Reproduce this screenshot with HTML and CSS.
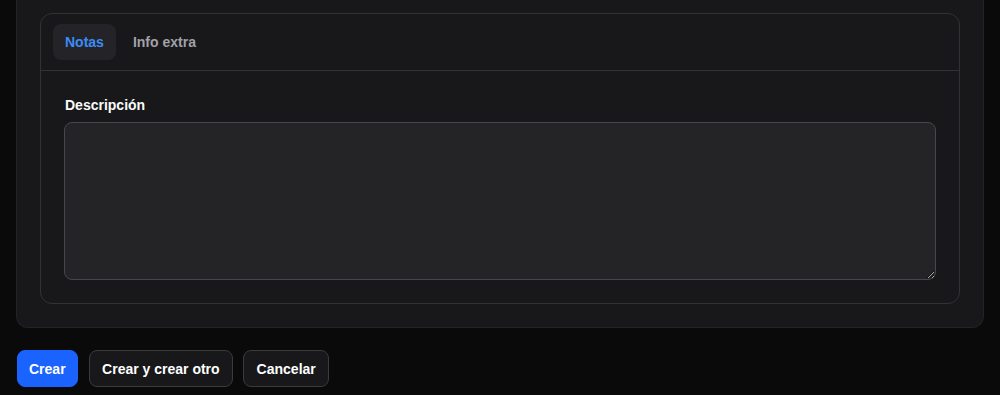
FILE: index.html
```html
<!DOCTYPE html>
<html lang="es">
<head>
<meta charset="utf-8">
<link rel="stylesheet" href="styles.css">
</head>
<body>
<div class="page">
  <section class="section">
    <div class="tabs-card">
      <div class="tab-bar">
        <button class="tab tab-active">Notas</button>
        <button class="tab">Info extra</button>
      </div>
      <div class="tab-panel">
        <label class="field-label" for="desc">Descripción</label>
        <textarea id="desc" class="textarea"></textarea>
      </div>
    </div>
  </section>
  <div class="actions">
    <button class="btn btn-primary">Crear</button>
    <button class="btn btn-secondary">Crear y crear otro</button>
    <button class="btn btn-secondary">Cancelar</button>
  </div>
</div>
</body>
</html>
```

FILE: styles.css
```css
html, body {
  margin: 0;
  padding: 0;
  background: #0a0a0b;
  font-family: "Liberation Sans", Arial, sans-serif;
  color: #fafafa;
}

.page {
  padding: 0 16px;
}

.section {
  background: #18181b;
  border: 1px solid #232326;
  border-top: none;
  border-radius: 0 0 12px 12px;
  padding: 13px 23px 23px;
}

.tabs-card {
  border: 1px solid #323236;
  border-radius: 12px;
  background: #18181b;
}

.tab-bar {
  display: flex;
  gap: 5px;
  padding: 10px 12px;
  border-bottom: 1px solid #323236;
}

.tab {
  font-family: inherit;
  font-size: 14px;
  font-weight: 700;
  height: 36px;
  padding: 0 12px;
  border: none;
  border-radius: 8px;
  background: transparent;
  color: #a1a1aa;
}

.tab-active {
  background: #242428;
  color: #3b8cf6;
}

.tab-panel {
  display: flex;
  flex-direction: column;
  gap: 7px;
  padding: 24px 23px 23px;
}

.field-label {
  font-size: 14px;
  font-weight: 700;
  line-height: 20px;
  color: #fafafa;
  padding-left: 1px;
}

.textarea {
  display: block;
  box-sizing: border-box;
  width: 100%;
  height: 158px;
  margin: 0;
  background: #242427;
  border: 1px solid #46464c;
  border-radius: 8px;
  color: #fafafa;
  font-family: inherit;
  font-size: 14px;
  resize: vertical;
}

.actions {
  display: flex;
  gap: 10px;
  padding: 22px 1px 8px;
}

.btn {
  font-family: inherit;
  font-size: 14px;
  font-weight: 700;
  height: 37px;
  padding: 0 12.5px;
  border-radius: 8px;
  color: #ffffff;
}

.btn-primary {
  padding: 0 11px;
  margin-right: 1px;
  background: #1a63ff;
  border: 1px solid #1a63ff;
}

.btn-secondary {
  background: #18181b;
  border: 1px solid #3a3a3f;
}
```
